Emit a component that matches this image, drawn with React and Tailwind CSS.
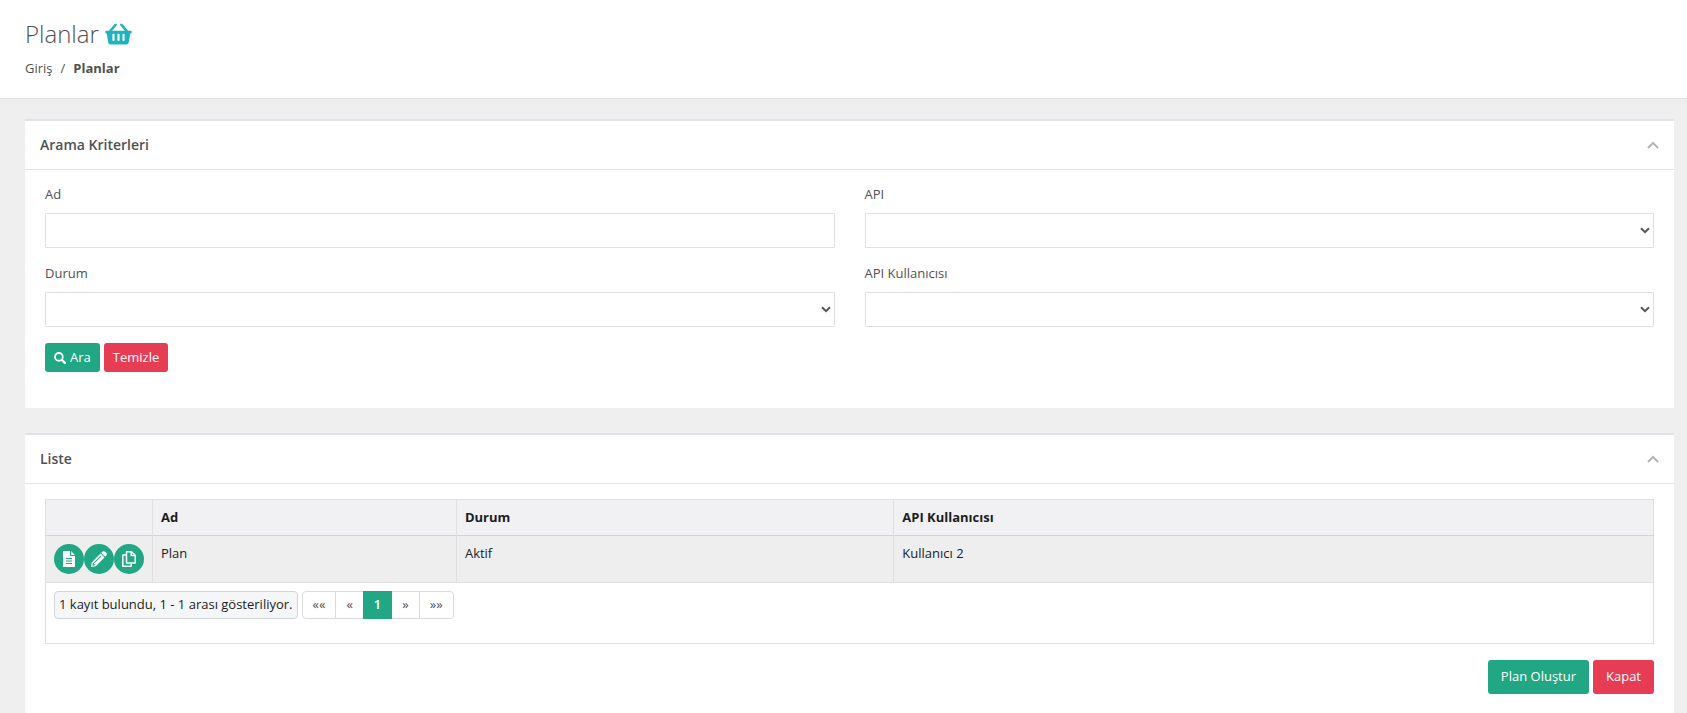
import React, { useState } from 'react';

const BasketIcon = () => (
  <svg width="27" height="22" viewBox="0 0 28 22" className="text-[#1fb2c0]" fill="currentColor">
    <path d="M5.4 8 11 1.4M22.6 8 17 1.4" stroke="currentColor" strokeWidth="2.6" strokeLinecap="round" />
    <path fillRule="evenodd" d="M1.3 7.600h25.4c.7 0 1 .4 1 .9v1c0 .6-.4 1-1 1h-.5l-1.600 9.400c-.2 1.200-1 1.900-2.100 1.900h-17c-1.100 0-1.900-.7-2.100-1.900L1.800 10.500h-.5c-.6 0-1-.4-1-1v-1c0-.5.3-.9 1-.9ZM8.800 10.800c-.7 0-1.100.4-1.100 1.100v5.200c0 .7.4 1.100 1.100 1.100s1.100-.4 1.100-1.100v-5.200c0-.7-.4-1.100-1.100-1.100Zm5.200 0c-.7 0-1.100.4-1.100 1.100v5.200c0 .7.4 1.100 1.100 1.100s1.100-.4 1.100-1.100v-5.200c0-.7-.4-1.100-1.100-1.100Zm5.200 0c-.7 0-1.100.4-1.100 1.100v5.200c0 .7.4 1.100 1.100 1.100s1.100-.4 1.100-1.100v-5.200c0-.7-.4-1.100-1.100-1.100Z" />
  </svg>
);

const SearchIcon = () => (
  <svg width="12" height="12" viewBox="0 0 13 13" fill="none" stroke="currentColor">
    <circle cx="5.3" cy="5.3" r="4.2" strokeWidth="2" />
    <path d="m8.5 8.5 3.3 3.3" strokeWidth="2.4" strokeLinecap="round" />
  </svg>
);

const DocumentIcon = () => (
  <svg width="12" height="16" viewBox="0 0 12 16" fill="currentColor">
    <path fillRule="evenodd" d="M0 0h7v5h5v11H0V0Zm3 7v1h6V7H3Zm0 2.500v1h6v-1H3ZM3 12v1h6v-1H3Z" />
    <path d="M8 0l4 4H8V0Z" />
  </svg>
);

const PencilIcon = () => (
  <svg width="16" height="16" viewBox="0 0 16 16" fill="currentColor">
    <path d="M10.900 1.100c1.100-1.100 2.300-1.200 3.300-.3l1 1c.9 1 .8 2.200-.3 3.300l-.7.7-4-4 .7-.7Z" />
    <path fillRule="evenodd" d="m9.500 2.500 4 4L4.800 15.200 0 16l.8-4.800L9.500 2.500Zm.1 2.200-6.500 6.500.7.7 6.500-6.500-.7-.7ZM1.800 12l-.4 2.200.5.500 2.200-.4v-1.100H2.900V12H1.800Z" />
  </svg>
);

const CopyIcon = () => (
  <svg width="14" height="16" viewBox="0 0 14 16" fill="none" stroke="currentColor" strokeWidth="1.5" strokeLinejoin="round">
    <path d="M4.500.8h5l3.700 3.500V12H4.500V.8Z" />
    <path d="M9.200 1v3.600H13" />
    <path d="M4.200 4H.8v11.200h8.400v-2.700" />
  </svg>
);

const Panel = ({ title, className = '', children }) => {
  const [open, setOpen] = useState(true);

  return (
    <section className={`bg-white border-t-2 border-[#e0e4e8] ${className}`}>
      <header className="flex items-center justify-between h-[49px] px-[15px] border-b border-[#e0e2e4]">
        <h2 className="text-[14px] leading-5 font-semibold">{title}</h2>
        <button type="button" aria-label={title} aria-expanded={open} onClick={() => setOpen(!open)} className="text-[#b4b4b4]">
          <svg width="12" height="8" viewBox="0 0 12 8" fill="none" stroke="currentColor" strokeWidth="2">
            <path d="M1 7 6 2l5 5" />
          </svg>
        </button>
      </header>
      {open && <div className="px-5 pt-[15px] pb-5">{children}</div>}
    </section>
  );
};

const SelectField = ({ id, label }) => (
  <div>
    <label htmlFor={id} className="block leading-[18px] mb-[10px]">{label}</label>
    <div className="relative">
      <select id={id} className="block w-full h-[35px] appearance-none bg-white border border-[#dfe0e1] rounded-[1px] px-3">
        <option value=""></option>
      </select>
      <svg className="absolute right-1 top-[14px] pointer-events-none" width="10" height="7" viewBox="0 0 10 7" fill="none" stroke="#555759" strokeWidth="2">
        <path d="M1 1.200 5 5.200 9 1.200" />
      </svg>
    </div>
  </div>
);

const rows = [{ name: 'Plan', status: 'Aktif', user: 'Kullanıcı 2' }];

const actions = [
  { label: 'Detay', icon: <DocumentIcon /> },
  { label: 'Düzenle', icon: <PencilIcon /> },
  { label: 'Kopyala', icon: <CopyIcon /> },
];

const App = () => {
  const [name, setName] = useState('');

  return (
    <div className="min-h-screen flex flex-col bg-[#efefef] text-[#4f5254] text-[13px] font-['Open_Sans',sans-serif]">
      {/* Page heading */}
      <div className="bg-white border-b border-[#e0e2e4] px-[25px] py-5">
        <h1 className="flex items-center gap-[6px] text-[24px] leading-7 font-light">
          Planlar <BasketIcon />
        </h1>
        <nav className="flex gap-2 mt-[10px] leading-5">
          <a href="#giris">Giriş</a>
          <span>/</span>
          <strong className="font-bold">Planlar</strong>
        </nav>
      </div>

      <main className="flex-1 flex flex-col gap-[25px] pl-[25px] pr-[13px] pt-5">
        <Panel title="Arama Kriterleri">
          <form onSubmit={(e) => e.preventDefault()}>
            <div className="grid grid-cols-2 gap-x-[30px] gap-y-4">
              <div>
                <label htmlFor="ad" className="block leading-[18px] mb-[10px]">Ad</label>
                <input
                  id="ad" type="text"
                  className="block w-full h-[35px] bg-white border border-[#dfe0e1] rounded-[1px] px-3"
                  value={name} onChange={(e) => setName(e.target.value)}
                />
              </div>
              <SelectField id="api" label="API" />
              <SelectField id="durum" label="Durum" />
              <SelectField id="kullanici" label="API Kullanıcısı" />
            </div>
            <div className="flex gap-1 my-4">
              <button type="submit" className="flex items-center gap-1 h-[29px] px-[9px] rounded-[3px] bg-[#21a783] text-white">
                <SearchIcon /> Ara
              </button>
              <button type="button" onClick={() => setName('')} className="h-[29px] px-[9px] rounded-[3px] bg-[#e63d55] text-white">
                Temizle
              </button>
            </div>
          </form>
        </Panel>

        <Panel title="Liste" className="flex-1">
          <table className="w-full table-fixed border-collapse border border-[#dfe0e1] text-[#1b1d1f]">
            <colgroup>
              <col className="w-[107px]" />
              <col className="w-[18.9%]" />
              <col className="w-[27.2%]" />
              <col />
            </colgroup>
            <thead>
              <tr className="h-[36px] bg-[#f1f1f4] border-b border-[#d2d4d6] text-left">
                <th className="border-r border-[#dfe0e1]"></th>
                <th className="px-2 border-r border-[#dfe0e1] font-bold">Ad</th>
                <th className="px-2 border-r border-[#dfe0e1] font-bold">Durum</th>
                <th className="px-2 font-bold">API Kullanıcısı</th>
              </tr>
            </thead>
            <tbody>
              {rows.map((row) => (
                <tr key={row.name} className="bg-[#eeeeee] border-b border-[#dfe0e1] align-top leading-[18px]">
                  <td className="p-2 border-r border-[#dfe0e1]">
                    <div className="flex">
                      {actions.map((action) => (
                        <button key={action.label} type="button" aria-label={action.label} className="w-[30px] h-[30px] flex items-center justify-center rounded-full bg-[#21a783] text-white">
                          {action.icon}
                        </button>
                      ))}
                    </div>
                  </td>
                  <td className="p-2 border-r border-[#dfe0e1]">{row.name}</td>
                  <td className="p-2 border-r border-[#dfe0e1]">{row.status}</td>
                  <td className="p-2">{row.user}</td>
                </tr>
              ))}
            </tbody>
            <tfoot>
              <tr>
                <td colSpan={4} className="px-2 pt-2 pb-6">
                  <div className="flex gap-1 h-7">
                    <span className="flex items-center px-1 bg-[#f5f6f8] border border-[#d2d6d9] rounded-[4px]">
                      1 kayıt bulundu, 1 - 1 arası gösteriliyor.
                    </span>
                    <div className="flex border border-[#d8dce0] rounded-[4px] text-[#47525c]">
                      <button type="button" className="px-[10px] border-r border-[#d8dce0]">««</button>
                      <button type="button" className="px-[10px]">«</button>
                      <button type="button" className="-my-px px-[11px] bg-[#21a783] text-white font-semibold">1</button>
                      <button type="button" className="px-[10px] border-r border-[#d8dce0]">»</button>
                      <button type="button" className="px-[10px]">»»</button>
                    </div>
                  </div>
                </td>
              </tr>
            </tfoot>
          </table>

          <div className="flex justify-end gap-1 mt-4">
            <button type="button" className="h-[34px] px-[13px] rounded-[3px] bg-[#21a783] text-white">Plan Oluştur</button>
            <button type="button" className="h-[34px] px-[13px] rounded-[3px] bg-[#e63d55] text-white">Kapat</button>
          </div>
        </Panel>
      </main>
    </div>
  );
};

export default App;
